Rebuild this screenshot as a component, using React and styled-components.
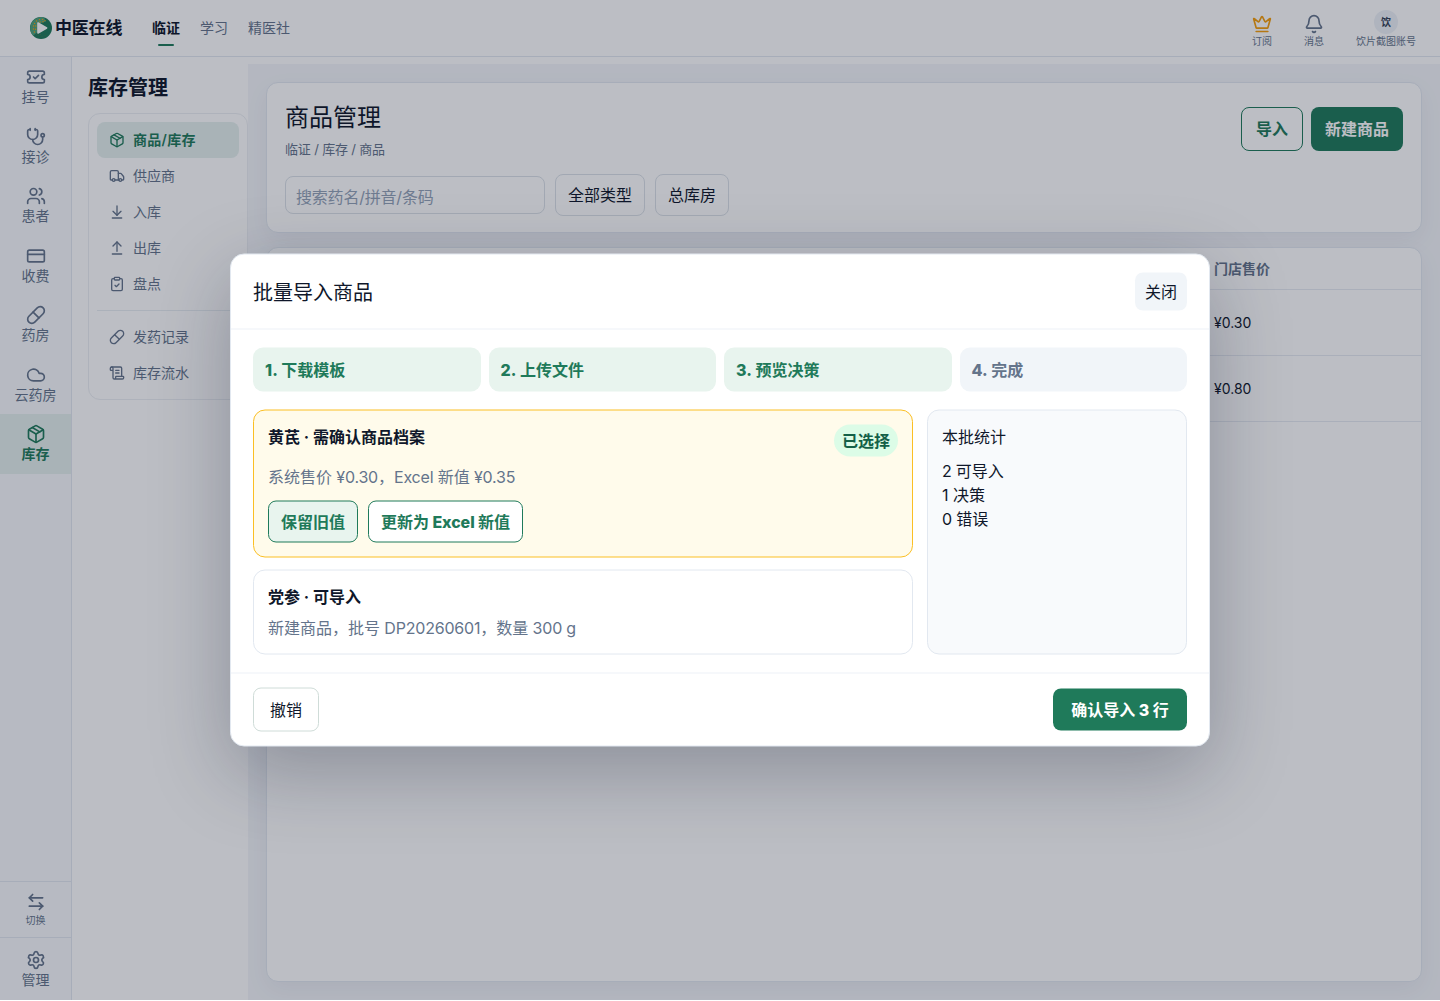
import React from 'react';
import styled, { createGlobalStyle, css } from 'styled-components';
import {
  ArrowDownToLine,
  ArrowLeftRight,
  ArrowUpFromLine,
  Bell,
  ClipboardCheck,
  Cloud,
  CreditCard,
  Crown,
  Package,
  Pill,
  ScrollText,
  Settings,
  Stethoscope,
  TicketCheck,
  Truck,
  Users,
} from 'lucide-react';

const GlobalStyle = createGlobalStyle`
  * {
    box-sizing: border-box;
  }
  body {
    margin: 0;
    background: #fff;
    color: #0f172a;
    font-family: Inter, 'Noto Sans CJK SC', sans-serif;
    font-size: 16px;
    line-height: 24px;
    -webkit-font-smoothing: antialiased;
  }
  h1, h2, p {
    margin: 0;
  }
  button, input {
    font: inherit;
    color: inherit;
  }
`;

const Page = styled.div`
  display: flex;
  flex-direction: column;
  height: 1000px;
  overflow: hidden;
  background: #fff;
`;

const TopBar = styled.header`
  display: flex;
  align-items: center;
  flex: none;
  height: 57px;
  padding: 0 24px 0 30px;
  border-bottom: 1px solid #e2e8f0;
`;

const Brand = styled.div`
  display: flex;
  align-items: center;
  gap: 3px;
  font-size: 17px;
  font-weight: 600;
  letter-spacing: -0.2px;
`;

const TopNav = styled.nav`
  display: flex;
  gap: 20px;
  margin-left: 29.7px;
`;

const TopNavItem = styled.a`
  position: relative;
  font-size: 14px;
  color: ${(props) => (props.$active ? '#0f172a' : '#64748b')};
  font-weight: ${(props) => (props.$active ? 700 : 400)};
  ${(props) =>
    props.$active &&
    css`
      &::after {
        content: '';
        position: absolute;
        left: 50%;
        bottom: -6px;
        width: 16px;
        height: 2px;
        margin-left: -8px;
        border-radius: 1px;
        background: #1f7a5a;
      }
    `}
`;

const TopActions = styled.div`
  display: flex;
  gap: 32px;
  margin-left: auto;
`;

const TopAction = styled.div`
  display: flex;
  flex-direction: column;
  align-items: center;
  justify-content: flex-end;
  height: 40px;
  min-width: 20px;
  font-size: 10px;
  line-height: 14px;
  color: #64748b;
`;

const Avatar = styled.span`
  display: flex;
  align-items: center;
  justify-content: center;
  width: 24px;
  height: 24px;
  border-radius: 50%;
  background: #eef2f7;
  color: #334155;
  font-weight: 600;
`;

const Shell = styled.div`
  display: flex;
  flex: 1;
  min-height: 0;
`;

const Rail = styled.aside`
  display: flex;
  flex-direction: column;
  flex: none;
  width: 72px;
  border-right: 1px solid #e2e8f0;
  background: #f8fafc;
`;

const RailItem = styled.a`
  display: flex;
  flex-direction: column;
  align-items: center;
  height: 59.5px;
  padding: 10px 0;
  font-size: 14px;
  line-height: 19.5px;
  color: ${(props) => (props.$active ? '#1f7a5a' : '#64748b')};
  font-weight: ${(props) => (props.$active ? 600 : 400)};
  background: ${(props) => (props.$active ? '#e5f0ee' : 'transparent')};
`;

const RailFooter = styled.div`
  margin-top: auto;
`;

const RailSwitch = styled(RailItem)`
  height: 56px;
  padding: 10px 0 0;
  border-top: 1px solid #e2e8f0;
  font-size: 10px;
  line-height: 17px;
`;

const RailManage = styled(RailItem)`
  height: 63px;
  padding-top: 12px;
  border-top: 1px solid #e2e8f0;
`;

const SubPanel = styled.aside`
  flex: none;
  width: 176px;
  padding: 16px 0 0 16px;
`;

const SubTitle = styled.h2`
  font-size: 20px;
  line-height: 30px;
  font-weight: 600;
`;

const SubMenu = styled.nav`
  margin-top: 10px;
  padding: 8px;
  border: 1px solid #eceff3;
  border-radius: 12px;
`;

const SubItem = styled.a`
  display: flex;
  align-items: center;
  gap: 8px;
  height: 36px;
  padding: 0 12px;
  border-radius: 8px;
  font-size: 14px;
  color: ${(props) => (props.$active ? '#1f7a5a' : '#64748b')};
  font-weight: ${(props) => (props.$active ? 600 : 400)};
  letter-spacing: ${(props) => (props.$active ? '0.3px' : 'normal')};
  background: ${(props) => (props.$active ? '#e5f0ee' : 'transparent')};
`;

const SubDivider = styled.div`
  height: 1px;
  margin: 8px 0;
  background: #e8edf2;
`;

const Main = styled.main`
  display: flex;
  flex-direction: column;
  flex: 1;
  gap: 14px;
  margin-top: 7px;
  padding: 18px;
  background: #f4f6fa;
`;

const Card = styled.section`
  border: 1px solid #e2e8f0;
  border-radius: 12px;
  background: #fff;
  box-shadow: 0 8px 24px rgba(15, 23, 42, 0.05);
`;

const HeadCard = styled(Card)`
  height: 151px;
  padding: 16px 18px;
`;

const HeadRow = styled.div`
  display: flex;
  align-items: center;
  gap: 8px;
  height: 60px;
`;

const HeadText = styled.div`
  flex: 1;
  padding-top: 2px;
`;

const PageTitle = styled.h1`
  font-size: 24px;
  line-height: 36px;
  font-weight: 400;
`;

const Crumbs = styled.p`
  margin-top: 4px;
  font-size: 13px;
  line-height: 19.5px;
  letter-spacing: -0.17px;
  color: #64748b;
`;

const Button = styled.button`
  flex: none;
  padding: 9px 14px;
  border: 1px solid #1f7a5a;
  border-radius: 8px;
  background: transparent;
  color: #1f7a5a;
  font-weight: 700;
  line-height: 24px;
`;

const PrimaryButton = styled(Button)`
  padding: 10px 14px;
  border: 0;
  background: #1f7a5a;
  color: #fff;
`;

const FilterRow = styled.div`
  display: flex;
  align-items: center;
  gap: 10px;
  margin-top: 15px;
`;

const SearchInput = styled.input`
  width: 260px;
  height: 38px;
  padding: 3px 10px 0;
  border: 1px solid #dbe1e8;
  border-radius: 8px;
  background: transparent;
  letter-spacing: -0.2px;

  &::placeholder {
    color: #94a3b8;
    opacity: 1;
  }
`;

const FilterButton = styled.button`
  padding: 8px 12px;
  border: 1px solid #dbe1e8;
  border-radius: 8px;
  background: transparent;
`;

const TableCard = styled(Card)`
  flex: 1;
`;

const TableRow = styled.div`
  height: 66px;
  padding: 21px 0 20px 947px;
  border-bottom: 1px solid #e6ebf1;
  font-size: 14px;
`;

const TableHead = styled(TableRow)`
  height: 42px;
  padding-top: 9px;
  padding-bottom: 8px;
  color: #64748b;
  font-weight: 600;
`;

const Overlay = styled.div`
  position: absolute;
  left: 0;
  top: 0;
  width: 100%;
  height: 1000px;
  overflow: hidden;
  background: rgba(15, 23, 42, 0.28);
`;

const Modal = styled.div`
  position: absolute;
  left: 50%;
  top: 50%;
  width: 980px;
  border: 1px solid #e2e8f0;
  border-radius: 14px;
  background: #fff;
  box-shadow: 0 24px 80px rgba(15, 23, 42, 0.28);
  transform: translate(-50%, -50%);
`;

const ModalHeader = styled.div`
  display: flex;
  align-items: center;
  justify-content: space-between;
  height: 75px;
  padding: 0 22px;
  border-bottom: 1px solid #eef2f7;
`;

const ModalTitle = styled.h2`
  padding-top: 2px;
  font-size: 20px;
  line-height: 30px;
  font-weight: 400;
`;

const CloseButton = styled.button`
  height: 38px;
  padding: 0 10px;
  border: 0;
  border-radius: 8px;
  background: #f1f5f9;
`;

const ModalBody = styled.div`
  padding: 18px 22px;
`;

const Steps = styled.div`
  display: grid;
  grid-template-columns: repeat(4, 1fr);
  gap: 8px;
`;

const Step = styled.div`
  padding: 10px 12px;
  border-radius: 10px;
  background: ${(props) => (props.$done ? '#e8f4ee' : '#f1f5f9')};
  color: ${(props) => (props.$done ? '#1f7a5a' : '#64748b')};
  font-weight: 700;
`;

const ImportGrid = styled.div`
  display: grid;
  grid-template-columns: 1fr 260px;
  gap: 14px;
  margin-top: 18px;
`;

const DecisionList = styled.div`
  display: flex;
  flex-direction: column;
  gap: 12px;
`;

const DecisionCard = styled.div`
  padding: 14px;
  border: 1px solid ${(props) => (props.$warn ? '#fbbf24' : '#e2e8f0')};
  border-radius: 12px;
  background: ${(props) => (props.$warn ? '#fffbeb' : '#fff')};
`;

const DecisionHead = styled.div`
  display: flex;
  align-items: flex-start;
  justify-content: space-between;
  font-weight: 700;
`;

const Badge = styled.span`
  padding: 4px 8px;
  border-radius: 999px;
  background: #dcfce7;
  color: #136047;
`;

const DecisionNote = styled.p`
  margin-top: ${(props) => (props.$tight ? 7 : 8)}px;
  color: #64748b;
`;

const Latin = styled.span`
  letter-spacing: -0.2px;
`;

// and slightly light in bold labels
const HeavyLatin = styled.span`
  font-weight: 800;
`;

const StepNumber = styled(HeavyLatin)`
  margin-right: 0.5px;
  letter-spacing: 0.1px;
`;

const Choices = styled.div`
  display: flex;
  gap: 10px;
  margin-top: 12px;
`;

const Choice = styled(Button)`
  padding: 8px 12px;
  background: ${(props) => (props.$selected ? '#e8f4ee' : '#fff')};

  ${HeavyLatin} {
    letter-spacing: -0.1px;
  }
`;

const Stats = styled.div`
  padding: 14px;
  border: 1px solid #e2e8f0;
  border-radius: 12px;
  background: #f8fafc;
`;

const StatLines = styled.div`
  margin-top: 10px;
`;

const ModalFooter = styled.div`
  display: flex;
  align-items: center;
  justify-content: space-between;
  padding: 14px 22px;
  border-top: 1px solid #eef2f7;
`;

const CancelButton = styled.button`
  padding: 9px 16px;
  border: 1px solid #cfdcd8;
  border-radius: 8px;
  background: #fff;
`;

const ConfirmButton = styled(PrimaryButton)`
  width: 134px;
  padding: 9px 0;
`;

const logoDots = [
  [6.5, 4], [9.5, 2.6], [12.5, 2.4], [15, 3.6], [4.6, 6.4], [3.6, 9], [3.4, 12],
  [4.4, 15], [10, 5], [13, 4.8], [5.8, 9], [5.6, 12.2],
];

const logoShadeDots = [
  [6.2, 17.4], [8.8, 18.8], [12, 19.4], [15, 18.4], [10.5, 17.4],
];

const Logo = () => (
  <svg width="22" height="22" viewBox="0 0 22 22">
    <circle cx="11" cy="11" r="11" fill="#1f7a5a" />
    <path d="M14 .5A11 11 0 0 0 3 18.5C5 17.5 7.5 15 8 14V7l8-2.5Z" fill="#4fa37c" />
    {logoDots.map(([x, y]) => (
      <circle key={`${x}-${y}`} cx={x} cy={y} r="0.7" fill="#fb9f0b" />
    ))}
    {logoShadeDots.map(([x, y]) => (
      <circle key={`${x}-${y}`} cx={x} cy={y} r="0.4" fill="#7d7a3f" />
    ))}
    <path
      d="M8 6v10l8.6-5Z"
      fill="#fff"
      stroke="#fff"
      strokeWidth="1.6"
      strokeLinejoin="round"
    />
  </svg>
);

const railItems = [
  { label: '挂号', icon: TicketCheck },
  { label: '接诊', icon: Stethoscope },
  { label: '患者', icon: Users },
  { label: '收费', icon: CreditCard },
  { label: '药房', icon: Pill },
  { label: '云药房', icon: Cloud },
  { label: '库存', icon: Package, active: true },
];

const stockItems = [
  { label: '商品/库存', icon: Package, active: true },
  { label: '供应商', icon: Truck },
  { label: '入库', icon: ArrowDownToLine },
  { label: '出库', icon: ArrowUpFromLine },
  { label: '盘点', icon: ClipboardCheck },
];

const recordItems = [
  { label: '发药记录', icon: Pill },
  { label: '库存流水', icon: ScrollText },
];

const steps = [
  { label: '下载模板', done: true },
  { label: '上传文件', done: true },
  { label: '预览决策', done: true },
  { label: '完成', done: false },
];

const renderSubItem = ({ label, icon: Icon, active }) => (
  <SubItem key={label} $active={active}>
    <Icon size={16} strokeWidth={2} />
    {label}
  </SubItem>
);

const ImportModal = () => (
  <Overlay>
    <Modal role="dialog">
      <ModalHeader>
        <ModalTitle>批量导入商品</ModalTitle>
        <CloseButton type="button">关闭</CloseButton>
      </ModalHeader>
      <ModalBody>
        <Steps>
          {steps.map(({ label, done }, index) => (
            <Step key={label} $done={done}>
              <StepNumber>{`${index + 1}. `}</StepNumber>
              {label}
            </Step>
          ))}
        </Steps>
        <ImportGrid>
          <DecisionList>
            <DecisionCard $warn>
              <DecisionHead>
                黄芪 · 需确认商品档案
                <Badge>已选择</Badge>
              </DecisionHead>
              <DecisionNote>
                系统售价<Latin> ¥0.30</Latin>，<Latin>Excel </Latin>新值
                <Latin> ¥0.35</Latin>
              </DecisionNote>
              <Choices>
                <Choice type="button" $selected>
                  保留旧值
                </Choice>
                <Choice type="button">
                  更新为<HeavyLatin> Excel </HeavyLatin>新值
                </Choice>
              </Choices>
            </DecisionCard>
            <DecisionCard>
              <DecisionHead>党参 · 可导入</DecisionHead>
              <DecisionNote $tight>
                新建商品，批号<Latin> DP20260601</Latin>，数量
                <Latin> 300 g</Latin>
              </DecisionNote>
            </DecisionCard>
          </DecisionList>
          <Stats>
            <p>本批统计</p>
            <StatLines>
              <p>
                <Latin>2 </Latin>可导入
              </p>
              <p>1 决策</p>
              <p>
                <Latin>0 </Latin>错误
              </p>
            </StatLines>
          </Stats>
        </ImportGrid>
      </ModalBody>
      <ModalFooter>
        <CancelButton type="button">撤销</CancelButton>
        <ConfirmButton type="button">
          确认导入<HeavyLatin> 3 </HeavyLatin>行
        </ConfirmButton>
      </ModalFooter>
    </Modal>
  </Overlay>
);

const App = () => (
  <>
    <GlobalStyle />
    <Page>
      <TopBar>
        <Brand>
          <Logo />
          中医在线
        </Brand>
        <TopNav>
          <TopNavItem $active>临证</TopNavItem>
          <TopNavItem>学习</TopNavItem>
          <TopNavItem>精医社</TopNavItem>
        </TopNav>
        <TopActions>
          <TopAction>
            <Crown size={20} strokeWidth={2} color="#f59e0b" />
            订阅
          </TopAction>
          <TopAction>
            <Bell size={20} strokeWidth={2} />
            消息
          </TopAction>
          <TopAction>
            <Avatar>饮</Avatar>
            饮片截图账号
          </TopAction>
        </TopActions>
      </TopBar>
      <Shell>
        <Rail>
          {railItems.map(({ label, icon: Icon, active }) => (
            <RailItem key={label} $active={active}>
              <Icon size={20} strokeWidth={2} />
              {label}
            </RailItem>
          ))}
          <RailFooter>
            <RailSwitch>
              <ArrowLeftRight size={20} strokeWidth={2} />
              切换
            </RailSwitch>
            <RailManage>
              <Settings size={20} strokeWidth={2} />
              管理
            </RailManage>
          </RailFooter>
        </Rail>
        <SubPanel>
          <SubTitle>库存管理</SubTitle>
          <SubMenu>
            {stockItems.map(renderSubItem)}
            <SubDivider />
            {recordItems.map(renderSubItem)}
          </SubMenu>
        </SubPanel>
        <Main>
          <HeadCard>
            <HeadRow>
              <HeadText>
                <PageTitle>商品管理</PageTitle>
                <Crumbs>临证 / 库存 / 商品</Crumbs>
              </HeadText>
              <Button type="button">导入</Button>
              <PrimaryButton type="button">新建商品</PrimaryButton>
            </HeadRow>
            <FilterRow>
              <SearchInput placeholder="搜索药名/拼音/条码" />
              <FilterButton type="button">全部类型</FilterButton>
              <FilterButton type="button">总库房</FilterButton>
            </FilterRow>
          </HeadCard>
          <TableCard>
            <TableHead>门店售价</TableHead>
            <TableRow>¥0.30</TableRow>
            <TableRow>¥0.80</TableRow>
          </TableCard>
        </Main>
      </Shell>
    </Page>
    <ImportModal />
  </>
);

export default App;
